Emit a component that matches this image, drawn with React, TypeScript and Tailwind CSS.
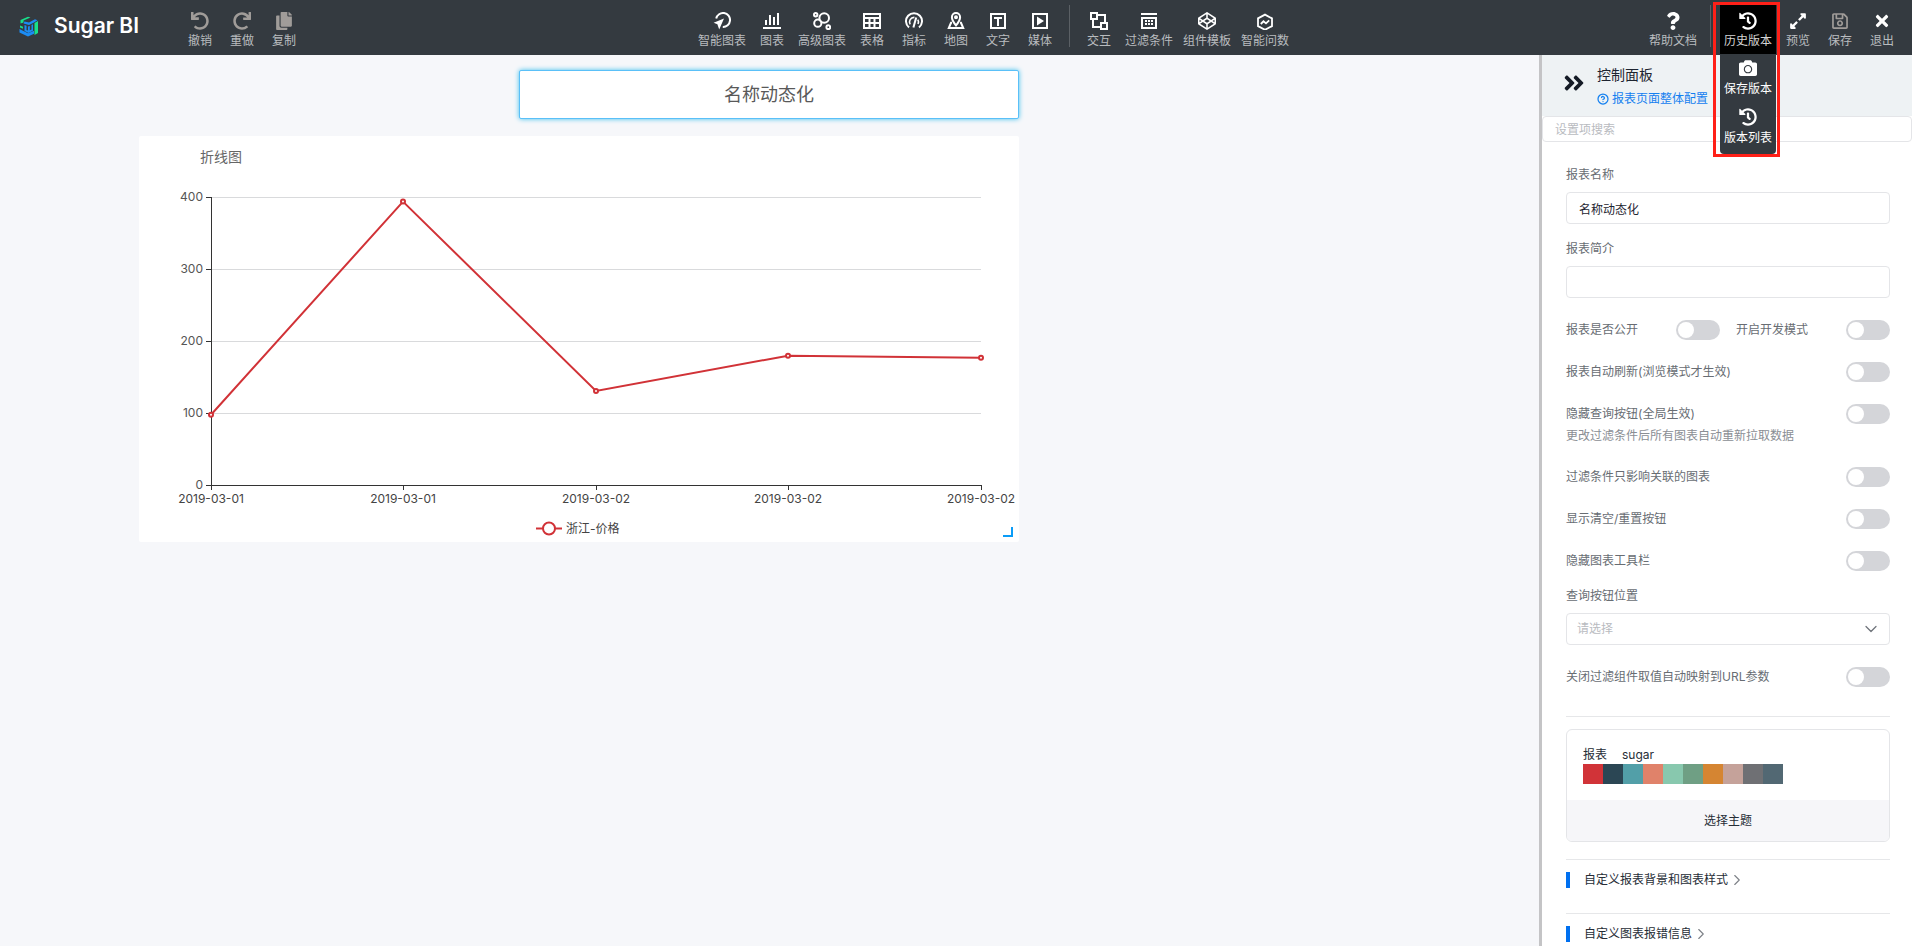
import React, { useState } from 'react';
import {
  FaUndo,
  FaRedo,
  FaCopy,
  FaHistory,
  FaCamera,
  FaQuestion,
  FaExpandAlt,
  FaRegSave,
  FaTimes,
  FaAngleDoubleRight,
  FaCodepen,
} from 'react-icons/fa';
import { ChevronDown, ChevronRight, CircleHelp } from 'lucide-react';

interface GlyphProps {
  children: React.ReactNode;
}

const Glyph: React.FC<GlyphProps> = ({ children }) => (
  <svg width="18" height="18" viewBox="0 0 18 18" fill="none" stroke="currentColor" strokeWidth="2">
    {children}
  </svg>
);

const SmartChartIcon = () => (
  <Glyph>
    <path d="M3.2 6.5A7 7 0 1 1 9.8 15" />
    <path d="M11 6.6 0.6 10.8 4.4 12.2 6.2 17.4Z" fill="currentColor" stroke="none" />
  </Glyph>
);

const BarChartIcon = () => (
  <Glyph>
    <path d="M0 16h18M3 8v5M7 3v10M11 5v8M15 1v12" />
  </Glyph>
);

const BubbleIcon = () => (
  <Glyph>
    <circle cx="11.2" cy="6" r="4.8" />
    <circle cx="4.8" cy="11.2" r="3.6" />
    <circle cx="2.7" cy="2.7" r="1.7" />
    <circle cx="15.3" cy="15.2" r="1.9" />
  </Glyph>
);

const TableIcon = () => (
  <Glyph>
    <path d="M1 2h16v14H1zM0 6h18M0 11h18M6.5 6v10M11.5 6v10" />
  </Glyph>
);

const GaugeIcon = () => (
  <Glyph>
    <path d="M4 15.4A8 8 0 1 1 14 15.4" />
    <path d="M5.2 12.4A4.6 4.6 0 0 1 9.4 5.4M12.8 7.6A4.6 4.6 0 0 1 13 12" strokeWidth="1.6" />
    <path d="M11.2 5.4 8.4 15.6" />
  </Glyph>
);

const MapIcon = () => (
  <Glyph>
    <path d="M9 13.4C6.5 10.4 4.9 8 4.9 5.2a4.1 4.1 0 0 1 8.2 0C13.1 8 11.5 10.4 9 13.4Z" />
    <circle cx="9" cy="5.2" r="1" />
    <path d="M5 10.8H4L1.8 16h14.4L14 10.8h-1" />
  </Glyph>
);

const TextIcon = () => (
  <Glyph>
    <path d="M2 2h14v14H2zM5 6h8M9 6v8" />
  </Glyph>
);

const MediaIcon = () => (
  <Glyph>
    <path d="M2 2h14v14H2z" />
    <path d="M6 4.5 13 9 6 13.5Z" fill="currentColor" stroke="none" />
  </Glyph>
);

const LinkIcon = () => (
  <Glyph>
    <path d="M1 1h6v6H1zM11 11h6v6h-6zM7 3h8v8M3 7v8h8" />
  </Glyph>
);

const FilterIcon = () => (
  <Glyph>
    <path d="M1 2h16M2 6h14v10H2zM5 9h2M8 9h2M11 9h2M5 12h2M8 12h2M11 12h2" />
  </Glyph>
);

const AskIcon = () => (
  <Glyph>
    <path d="M9 2.6 16 6.4v7.7l-7 3.7-7-3.7V6.4Z" strokeWidth="1.8" />
    <path d="M4.8 12 7.5 9.3 10 11.4 13.2 8.4" strokeWidth="1.8" />
  </Glyph>
);

const Logo = () => (
  <svg width="20" height="21" viewBox="0 0 20 21">
    <path d="M1.5 4 9 .8 11.500 1.600 4.500 4.600V6.500L1.500 7.600Z" fill="#18e08b" />
    <path d="M1 9.500l3 1.300v2L1 11.500Z" fill="#18e08b" />
    <path d="M15.500 7 19 5v12l-3.500 2Z" fill="#18e08b" />
    <path d="M5.500 5.500 10 6.500 16 3.300 18.500 4.200 14.500 6.700 10 9 4.500 7.500Z" fill="#1b8cf5" />
    <path d="M5.500 9 7.500 9.800v4.200l1.500.500V10.500l1.800-.500v4.300l1.700-.800V9l1.500-.700v6.500L9.500 17 5.500 15Z" fill="#1b8cf5" />
    <path d="M.500 13 9 17.200 15 14.800v3L9 20.500.500 16.500Z" fill="#1b8cf5" />
  </svg>
);

interface ToolProps {
  icon: React.ReactNode;
  label: string;
  className?: string;
}

const Tool: React.FC<ToolProps> = ({ icon, label, className = 'text-white' }) => (
  <button className={`flex h-12 min-w-10 shrink-0 flex-col items-center px-1 pt-[7px] ${className}`}>
    <span className="flex h-[18px] items-center text-lg">{icon}</span>
    <span className="text-xs leading-[22px] whitespace-nowrap text-[#b9bcbf]">{label}</span>
  </button>
);

const Divider = () => <div className="mx-[7px] h-[42px] w-px shrink-0 self-start bg-[#5b6065]" />;

const chartTools = [
  { label: '智能图表', icon: <SmartChartIcon /> },
  { label: '图表', icon: <BarChartIcon /> },
  { label: '高级图表', icon: <BubbleIcon /> },
  { label: '表格', icon: <TableIcon /> },
  { label: '指标', icon: <GaugeIcon /> },
  { label: '地图', icon: <MapIcon /> },
  { label: '文字', icon: <TextIcon /> },
  { label: '媒体', icon: <MediaIcon /> },
];

const componentTools = [
  { label: '交互', icon: <LinkIcon /> },
  { label: '过滤条件', icon: <FilterIcon /> },
  { label: '组件模板', icon: <FaCodepen /> },
  { label: '智能问数', icon: <AskIcon /> },
];

const HistoryMenu = () => (
  <div className="relative z-10 h-[49px] w-14 shrink-0 bg-black text-white">
    <button className="flex w-full flex-col items-center pt-[7px]">
      <FaHistory className="text-lg" />
      <span className="text-xs leading-[22px] whitespace-nowrap text-[#d4d4d4]">历史版本</span>
    </button>
    <div className="absolute top-[49px] left-0 w-14 rounded-b bg-[#343a40] pb-1">
      <button className="flex w-full flex-col items-center pt-[5px]">
        <FaCamera className="text-lg" />
        <span className="text-xs leading-6 whitespace-nowrap">保存版本</span>
      </button>
      <button className="flex w-full flex-col items-center pt-[7px]">
        <FaHistory className="text-lg" />
        <span className="text-xs leading-6 whitespace-nowrap">版本列表</span>
      </button>
    </div>
    <div className="pointer-events-none absolute -top-[3px] -left-[7px] h-[155px] w-[67px] border-3 border-[#ff2018]" />
  </div>
);

const Header = () => (
  <header className="flex h-[55px] shrink-0 justify-between bg-[#343a40] pt-[5px] pr-[10px] pl-[19px]">
    <div className="mr-[38px] flex gap-[2px]">
      <a href="#" className="mr-[38px] flex h-[42px] w-[121px] items-center gap-[15px] whitespace-nowrap text-white">
        <Logo />
        <span className="text-[21px] font-semibold">Sugar BI</span>
      </a>
      <Tool icon={<FaUndo />} label="撤销" className="text-[#a09c99]" />
      <Tool icon={<FaRedo />} label="重做" className="text-[#a09c99]" />
      <Tool icon={<FaCopy />} label="复制" className="text-[#a09c99]" />
    </div>
    <nav className="flex gap-[2px]">
      {chartTools.map((tool) => (
        <Tool key={tool.label} icon={tool.icon} label={tool.label} />
      ))}
      <Divider />
      {componentTools.map((tool) => (
        <Tool key={tool.label} icon={tool.icon} label={tool.label} />
      ))}
    </nav>
    <div className="flex gap-[2px]">
      <Tool icon={<FaQuestion />} label="帮助文档" />
      <Divider />
      <HistoryMenu />
      <Tool icon={<FaExpandAlt />} label="预览" />
      <Tool icon={<FaRegSave />} label="保存" className="text-[#a09c99]" />
      <Tool icon={<FaTimes />} label="退出" />
    </div>
  </header>
);

const points = [
  { date: '2019-03-01', value: 99 },
  { date: '2019-03-01', value: 395 },
  { date: '2019-03-02', value: 132 },
  { date: '2019-03-02', value: 181 },
  { date: '2019-03-02', value: 178 },
];

const LineChart = () => {
  const left = 72;
  const right = 842;
  const bottom = 350;
  const toX = (i: number) => Math.floor(left + (i * (right - left)) / (points.length - 1));
  const toY = (v: number) => bottom - v * 0.72;

  return (
    <svg viewBox="0 0 880 406" className="block w-full" role="img" aria-label="折线图">
      <text x="61" y="26" fontSize="14" fill="#666">折线图</text>
      {[0, 100, 200, 300, 400].map((v) => (
        <g key={v}>
          {v > 0 && <path d={`M${left} ${toY(v) - 0.5}H${right}`} stroke="#d9dadc" />}
          <path d={`M${left - 5} ${toY(v) - 0.5}h5`} stroke="#333" />
          <text x="64" y={toY(v) + 3} fontSize="12" fill="#555" textAnchor="end">{v}</text>
        </g>
      ))}
      <path d={`M${left + 0.5} 61V${bottom}M${left} ${bottom - 0.5}H${right + 1}`} stroke="#333" />
      {points.map((p, i) => (
        <g key={i}>
          <path d={`M${toX(i) + 0.5} ${bottom}v4`} stroke="#333" />
          <text x={toX(i)} y="367" fontSize="12" fill="#444" textAnchor="middle">{p.date}</text>
        </g>
      ))}
      <polyline
        points={points.map((p, i) => `${toX(i)},${toY(p.value)}`).join(' ')}
        fill="none"
        stroke="#d13237"
        strokeWidth="2"
      />
      {points.map((p, i) => (
        <circle key={i} cx={toX(i)} cy={toY(p.value)} r="2" fill="#fff" stroke="#d13237" strokeWidth="2" />
      ))}
      {/* Legend */}
      <path d="M397 392.5h26" stroke="#d13237" strokeWidth="2" />
      <circle cx="410" cy="392.5" r="6" fill="#fff" stroke="#d13237" strokeWidth="2" />
      <text x="427" y="397" fontSize="12" fill="#444">浙江-价格</text>
      {/* Resize handle */}
      <path d="M864 400h9v-9" fill="none" stroke="#0a9cf7" strokeWidth="2" />
    </svg>
  );
};

interface ToggleRowProps {
  id: string;
  label: string;
}

const Toggle: React.FC<{ id: string }> = ({ id }) => (
  <input
    id={id}
    type="checkbox"
    role="switch"
    className="flex h-5 w-11 shrink-0 appearance-none items-center rounded-full bg-[#d4d5d9] px-[2px] before:h-4 before:w-4 before:rounded-full before:bg-white before:content-[''] checked:justify-end checked:bg-blue-600"
  />
);

const ToggleRow: React.FC<ToggleRowProps> = ({ id, label }) => (
  <div className="flex h-5 items-center justify-between">
    <label htmlFor={id}>{label}</label>
    <Toggle id={id} />
  </div>
);

const swatches = [
  'bg-[#d13338]',
  'bg-[#2b4654]',
  'bg-[#529fa8]',
  'bg-[#e0826a]',
  'bg-[#88c8ae]',
  'bg-[#6f9f84]',
  'bg-[#d58532]',
  'bg-[#c5a29a]',
  'bg-[#6f7074]',
  'bg-[#526873]',
];

const FoldLink: React.FC<{ label: string }> = ({ label }) => (
  <div className="h-[54px] border-t border-[#e6e7e9] pt-3">
    <button className="flex h-4 items-center border-l-4 border-[#0070f0] pl-[14px] text-[#262d36]">
      {label}
      <ChevronRight className="text-[#7d8187]" size={18} strokeWidth={1.5} />
    </button>
  </div>
);

const fieldClass = 'block h-8 w-full rounded border border-[#e4e5e8] bg-white text-xs text-[#1d2430] outline-none';

const ControlPanel = () => {
  const [name, setName] = useState('名称动态化');

  return (
    <aside className="flex w-[373px] shrink-0 flex-col border-l-3 border-[#c4c4c6] bg-white text-xs text-[#686d73]">
      <div className="flex h-[61px] shrink-0 items-center bg-[#eef2f4] pl-5">
        <button aria-label="收起" className="mt-[-6px] text-[#151b26]">
          <FaAngleDoubleRight size={24} />
        </button>
        <div className="ml-[11px] flex flex-col gap-1 pt-[2px]">
          <h2 className="text-sm text-[#1d2430]">控制面板</h2>
          <a href="#" className="flex items-center gap-[3px] leading-5 text-[#1480f0]">
            <CircleHelp size={12} strokeWidth={2.5} />
            报表页面整体配置
          </a>
        </div>
      </div>
      <input
        aria-label="设置项搜索"
        placeholder="设置项搜索"
        className="h-[26px] w-full shrink-0 rounded border border-[#e4e5e8] px-3 text-xs outline-none placeholder:text-[#b9bbbf]"
      />

      <div className="flex flex-col pt-6 pr-[22px] pl-6">
        <label htmlFor="name" className="mb-2 leading-[18px]">报表名称</label>
        <input id="name" className={`${fieldClass} px-3`} value={name} onChange={(e) => setName(e.target.value)} />
        <label htmlFor="intro" className="mt-4 mb-2 leading-[18px]">报表简介</label>
        <input id="intro" className={`${fieldClass} px-3`} />

        <div className="mt-[22px] flex flex-col gap-[22px]">
          <div className="flex h-5 items-center justify-between">
            <div className="flex w-[154px] items-center justify-between">
              <label htmlFor="public">报表是否公开</label>
              <Toggle id="public" />
            </div>
            <div className="flex w-[154px] items-center justify-between">
              <label htmlFor="dev">开启开发模式</label>
              <Toggle id="dev" />
            </div>
          </div>
          <ToggleRow id="refresh" label="报表自动刷新(浏览模式才生效)" />
          <div>
            <ToggleRow id="hide-query" label="隐藏查询按钮(全局生效)" />
            <p className="mt-[3px] leading-[18px] text-[#8a8e94]">更改过滤条件后所有图表自动重新拉取数据</p>
          </div>
          <ToggleRow id="related" label="过滤条件只影响关联的图表" />
          <ToggleRow id="reset" label="显示清空/重置按钮" />
          <ToggleRow id="toolbar" label="隐藏图表工具栏" />
        </div>

        <label htmlFor="position" className="mt-4 mb-2 leading-[18px]">查询按钮位置</label>
        <div className="relative">
          <select id="position" defaultValue="" className={`${fieldClass} appearance-none px-[10px] text-[#b9bbbf]`}>
            <option value="">请选择</option>
          </select>
          <ChevronDown className="pointer-events-none absolute top-[6px] right-[9px] text-[#6f747b]" size={20} strokeWidth={1.5} />
        </div>

        <div className="mt-[22px] mb-[29px]">
          <ToggleRow id="url" label="关闭过滤组件取值自动映射到URL参数" />
        </div>

        <div className="border-t border-[#e6e7e9] pt-3 pb-[17px] text-[#262d36]">
          <div className="overflow-hidden rounded-md border border-[#e4e5e8]">
            <div className="h-[70px] px-4 pt-4">
              <div className="flex gap-[15px] leading-[18px]">
                <span>报表</span>
                <span>sugar</span>
              </div>
              <div className="flex">
                {swatches.map((color) => (
                  <div key={color} className={`h-5 w-5 ${color}`} />
                ))}
              </div>
            </div>
            <button className="h-[41px] w-full bg-[#f6f6f9]">选择主题</button>
          </div>
        </div>

        <FoldLink label="自定义报表背景和图表样式" />
        <FoldLink label="自定义图表报错信息" />
      </div>
    </aside>
  );
};

const App: React.FC = () => (
  <div className="flex h-screen flex-col overflow-hidden bg-[#f6f7fa] font-[Inter,'Noto_Sans_CJK_SC',sans-serif]">
    <Header />
    <div className="flex min-h-0 flex-1">
      <main className="min-w-0 flex-1 overflow-hidden pt-[15px] pl-[139px]">
        <div className="flex w-full max-w-[880px] flex-col gap-[17px]">
          <h1 className="flex h-[49px] w-full max-w-[500px] items-center justify-center self-end rounded-xs border border-[#5ac0f8] bg-white text-lg text-[#595959] shadow-[0_0_5px_#3fc0ee]">
            名称动态化
          </h1>
          <section className="rounded-xs bg-white">
            <LineChart />
          </section>
        </div>
      </main>
      <ControlPanel />
    </div>
  </div>
);

export default App;
